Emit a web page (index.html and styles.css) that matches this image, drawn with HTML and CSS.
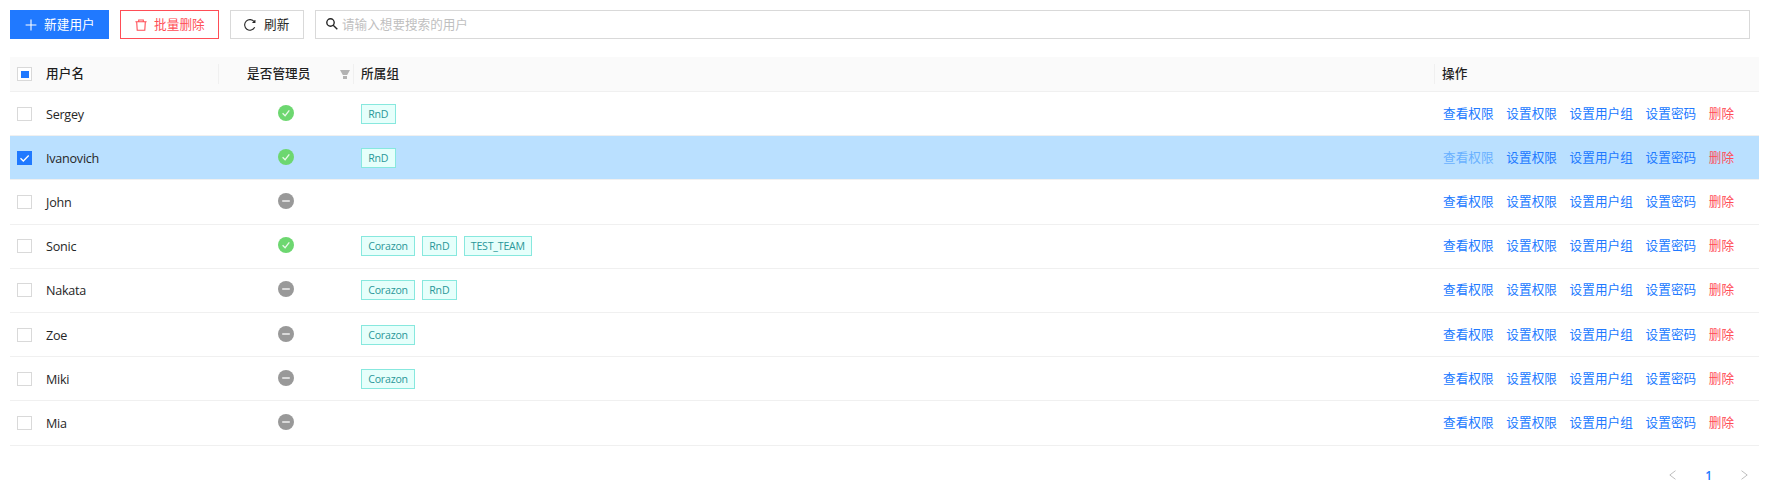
FILE: index.html
```html
<!DOCTYPE html>
<html lang="zh-CN">
<head>
<meta charset="utf-8">
<title>用户管理</title>
<link rel="stylesheet" href="styles.css">
</head>
<body>
<svg class="sprite" aria-hidden="true">
  <symbol id="check" viewBox="0 0 16 16"><circle cx="8" cy="8" r="8" fill="#6dd770"/><path d="M4.6 8.2 7.1 10.7 11.3 5.3" fill="none" stroke="#fff" stroke-opacity=".85" stroke-width="1.3"/></symbol>
  <symbol id="minus" viewBox="0 0 16 16"><circle cx="8" cy="8" r="8" fill="#999"/><path d="M4.2 8h7.6" stroke="#fff" stroke-opacity=".85" stroke-width="1.5"/></symbol>
</svg>

<div class="toolbar">
  <button class="btn btn-primary"><svg class="icon" viewBox="0 0 12 12"><path d="M6 .6v10.8M.6 6h10.8"/></svg>新建用户</button>
  <button class="btn btn-danger"><svg class="icon" viewBox="0 0 12 12"><path d="M.4 2.7h11.2M3.7 2.7V1h4.6v1.7M1.7 2.7l.5 8.6h7.6l.5-8.6"/></svg>批量删除</button>
  <button class="btn"><svg class="icon" viewBox="0 0 12 12"><path d="M10.7 8.3A5.3 5.3 0 1 1 10.3 2.9M10.9 1v2.5H8.4"/></svg>刷新</button>
  <label class="search"><svg class="icon" viewBox="0 0 12 12"><circle cx="4.5" cy="4.5" r="3.7"/><path d="M7.2 7.2 11.3 11.3"/></svg><span>请输入想要搜索的用户</span></label>
</div>

<div class="table">
  <div class="row head">
    <div class="cell"><i class="box partial"></i></div>
    <div class="cell split">用户名</div>
    <div class="cell split admin">是否管理员<svg class="filter" viewBox="0 0 10 9"><path d="M0 0h10L7.2 5H2.8zM3 6h4v3H3z"/></svg></div>
    <div class="cell split">所属组</div>
    <div class="cell">操作</div>
  </div>
  <div class="row">
    <div class="cell"><i class="box"></i></div><div class="cell name">Sergey</div>
    <div class="cell state"><svg><use href="#check"/></svg></div>
    <div class="cell tags"><span class="tag">RnD</span></div>
    <div class="cell actions"><a>查看权限</a><a>设置权限</a><a>设置用户组</a><a>设置密码</a><a class="danger">删除</a></div>
  </div>
  <div class="row selected">
    <div class="cell"><i class="box checked"><svg viewBox="0 0 15 14"><path d="M3.5 7.2 6.3 10 11.7 4.5"/></svg></i></div><div class="cell name">Ivanovich</div>
    <div class="cell state"><svg><use href="#check"/></svg></div>
    <div class="cell tags"><span class="tag">RnD</span></div>
    <div class="cell actions"><a class="hovered">查看权限</a><a>设置权限</a><a>设置用户组</a><a>设置密码</a><a class="danger">删除</a></div>
  </div>
  <div class="row">
    <div class="cell"><i class="box"></i></div><div class="cell name">John</div>
    <div class="cell state"><svg><use href="#minus"/></svg></div>
    <div class="cell tags"></div>
    <div class="cell actions"><a>查看权限</a><a>设置权限</a><a>设置用户组</a><a>设置密码</a><a class="danger">删除</a></div>
  </div>
  <div class="row">
    <div class="cell"><i class="box"></i></div><div class="cell name">Sonic</div>
    <div class="cell state"><svg><use href="#check"/></svg></div>
    <div class="cell tags"><span class="tag">Corazon</span><span class="tag">RnD</span><span class="tag">TEST_TEAM</span></div>
    <div class="cell actions"><a>查看权限</a><a>设置权限</a><a>设置用户组</a><a>设置密码</a><a class="danger">删除</a></div>
  </div>
  <div class="row">
    <div class="cell"><i class="box"></i></div><div class="cell name">Nakata</div>
    <div class="cell state"><svg><use href="#minus"/></svg></div>
    <div class="cell tags"><span class="tag">Corazon</span><span class="tag">RnD</span></div>
    <div class="cell actions"><a>查看权限</a><a>设置权限</a><a>设置用户组</a><a>设置密码</a><a class="danger">删除</a></div>
  </div>
  <div class="row">
    <div class="cell"><i class="box"></i></div><div class="cell name">Zoe</div>
    <div class="cell state"><svg><use href="#minus"/></svg></div>
    <div class="cell tags"><span class="tag">Corazon</span></div>
    <div class="cell actions"><a>查看权限</a><a>设置权限</a><a>设置用户组</a><a>设置密码</a><a class="danger">删除</a></div>
  </div>
  <div class="row">
    <div class="cell"><i class="box"></i></div><div class="cell name">Miki</div>
    <div class="cell state"><svg><use href="#minus"/></svg></div>
    <div class="cell tags"><span class="tag">Corazon</span></div>
    <div class="cell actions"><a>查看权限</a><a>设置权限</a><a>设置用户组</a><a>设置密码</a><a class="danger">删除</a></div>
  </div>
  <div class="row">
    <div class="cell"><i class="box"></i></div><div class="cell name">Mia</div>
    <div class="cell state"><svg><use href="#minus"/></svg></div>
    <div class="cell tags"></div>
    <div class="cell actions"><a>查看权限</a><a>设置权限</a><a>设置用户组</a><a>设置密码</a><a class="danger">删除</a></div>
  </div>
</div>

<div class="pagination">
  <svg viewBox="0 0 7 10"><path d="M6.5.7.8 5l5.7 4.3"/></svg>
  <span>1</span>
  <svg viewBox="0 0 7 10"><path d="M.5.7 6.2 5 .5 9.3"/></svg>
</div>
</body>
</html>
```

FILE: styles.css
```css
* { box-sizing: border-box; }
html, body { height: 100%; }
body {
  margin: 0;
  padding: 10px 9px 0 10px;
  overflow: hidden;
  background: #fff;
  color: #262626;
  font: 12.6px/20px "Open Sans", "Noto Sans CJK SC", sans-serif;
}
.sprite { display: none; }

.toolbar { display: flex; gap: 11px; height: 29px; padding-right: 9px; }
.btn {
  display: flex;
  align-items: center;
  width: 99px;
  height: 29px;
  padding: 0 0 0 14px;
  border: 1px solid #d9d9d9;
  border-radius: 0;
  background: #fff;
  color: #262626;
  font: inherit;
  letter-spacing: .1px;
  white-space: nowrap;
}
.btn:nth-child(3) { width: 74px; padding-left: 13px; }
.btn .icon { margin-right: 7px; }
.btn:nth-child(3) .icon { margin-right: 8px; }
.btn-primary { border-color: #2079ff; background: #2079ff; color: #fff; }
.btn-danger { border-color: #ff4d56; color: #ff4d56; }
.icon { flex: none; width: 12px; height: 12px; fill: none; stroke: currentColor; stroke-width: 1.1; }
.search {
  display: flex;
  flex: 1;
  align-items: center;
  padding-left: 10px;
  border: 1px solid #d9d9d9;
  color: #bfbfbf;
}
.search .icon { margin: -2px 4px 0 0; color: #262626; stroke-width: 1.4; }

.table { margin-top: 18px; }
.row {
  display: grid;
  grid-template-columns: 36px 173px 135px 1081px 1fr;
  height: 44.2px;
  border-bottom: 1px solid #f0f0f0;
}
.cell { display: flex; align-items: center; }
.cell:first-child { padding-left: 7px; }
.head { height: 35px; background: #fafafa; color: #1f1f1f; font-weight: 500; letter-spacing: .1px; }
.head .split { background: linear-gradient(#f0f0f0, #f0f0f0) right center / 1px 20px no-repeat; }
.head .cell:nth-child(n+4), .tags { padding-left: 7px; }
.head .admin { justify-content: space-between; padding: 0 4px 0 28px; }
.filter { width: 10px; height: 9px; fill: #b3b3b3; }
.selected { background: #bae0ff; }
.name { padding-top: 2px; letter-spacing: -.25px; }

.box { display: block; width: 15px; height: 14px; border: 1px solid #d9d9d9; background: #fff; }
.partial { background: linear-gradient(#2079ff, #2079ff) center / 8px 7px no-repeat #fff; }
.checked { border: 0; background: #2079ff; }
.checked svg { display: block; width: 15px; height: 14px; fill: none; stroke: #fff; stroke-width: 1.3; }

.state { justify-content: center; padding: 0 2px 2px 0; }
.state svg { width: 16px; height: 16px; }
.tags { gap: 7px; }
.tag {
  height: 20px;
  padding: 0 6.2px;
  border: 1px solid #87e8de;
  background: #e6fffb;
  color: #2a9799;
  font-size: 10.6px;
  line-height: 18px;
  letter-spacing: -.2px;
}
.actions { gap: 12.6px; padding-left: 8px; color: #2079ff; letter-spacing: .08px; }
.actions .hovered { color: #69b1ff; }
.actions .danger { color: #ff4d56; }

.pagination { display: flex; align-items: center; justify-content: flex-end; gap: 29px; height: 20px; margin-top: 20px; padding-right: 11px; }
.pagination svg { width: 7px; height: 10px; margin-bottom: 2px; fill: none; stroke: #bfbfbf; }
.pagination span { color: #2079ff; font-weight: 600; font-size: 12px; }
```
